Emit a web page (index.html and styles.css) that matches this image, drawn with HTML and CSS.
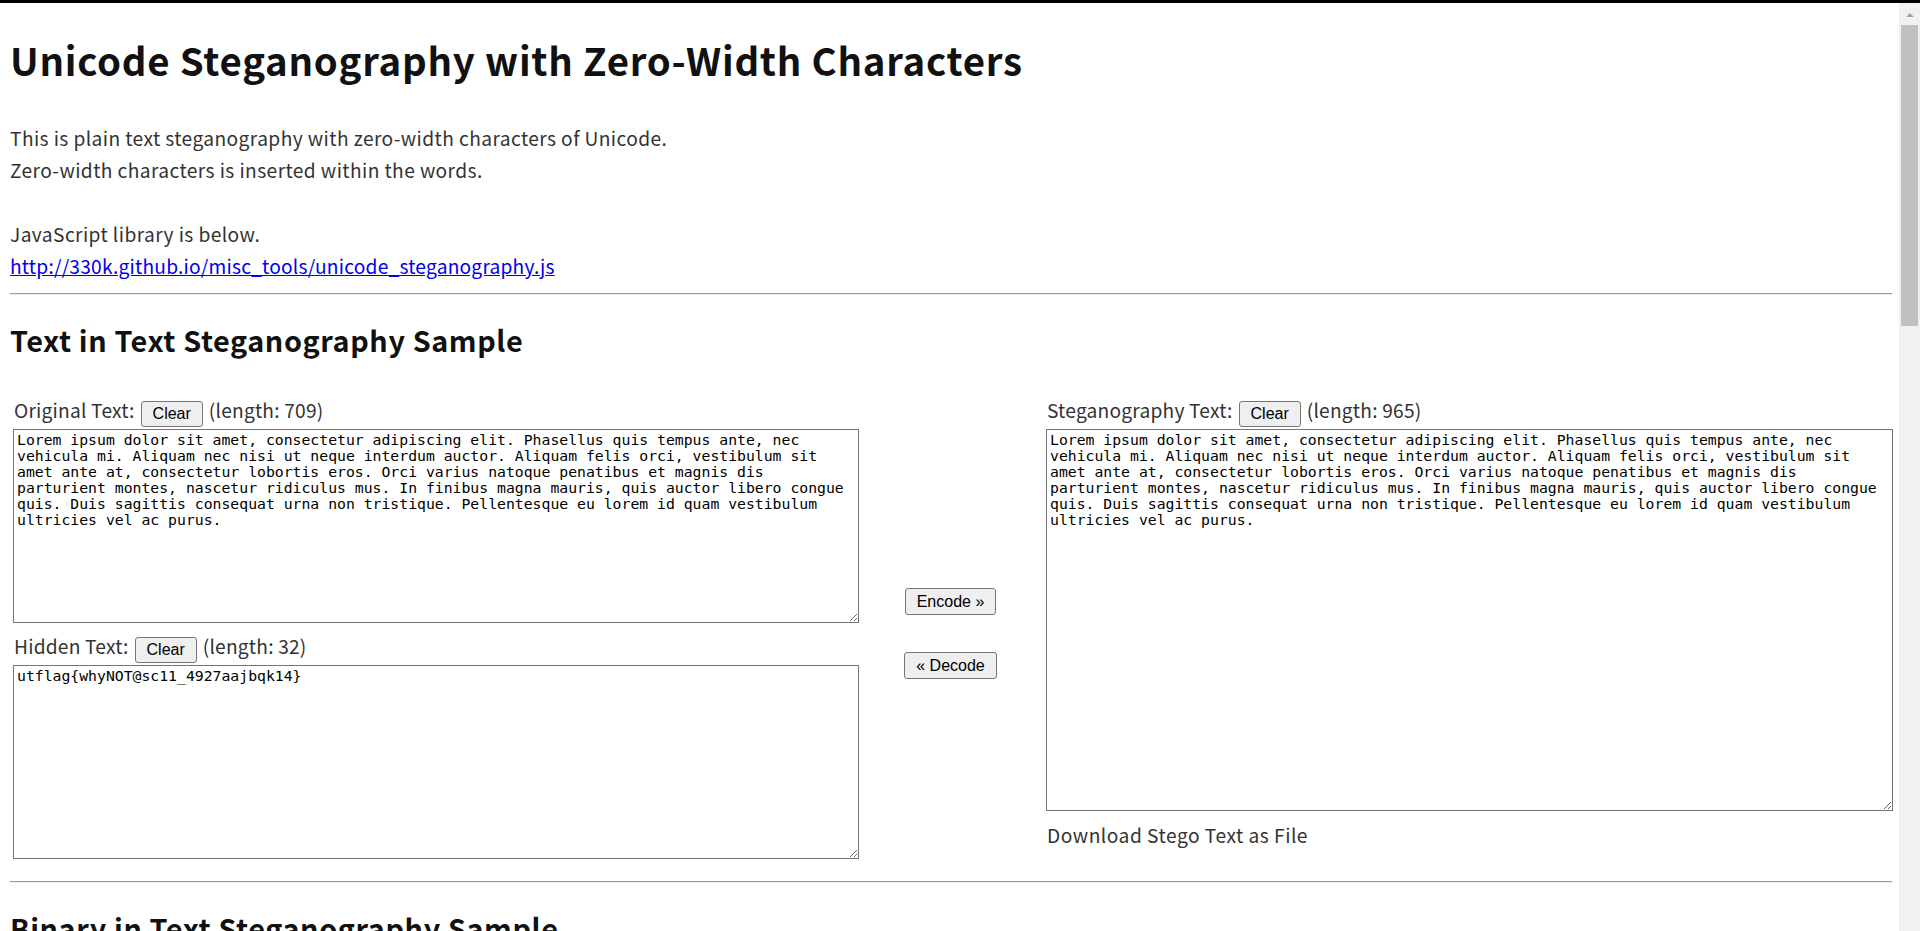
FILE: index.html
```html
<!DOCTYPE html>
<html lang="en">
<head>
<meta charset="utf-8">
<title>Unicode Steganography with Zero-Width Characters</title>
<link rel="stylesheet" href="styles.css">
</head>
<body>
<div class="topbar"></div>
<div class="window">
  <main class="page">
    <h1 class="title">Unicode Steganography with Zero-Width Characters</h1>
    <p class="intro">This is plain text steganography with zero-width characters of Unicode.<br>Zero-width characters is inserted within the words.<br><br>JavaScript library is below.<br><a class="lib-link" href="#">http://330k.github.io/misc_tools/unicode_steganography.js</a></p>
    <hr class="rule">
    <h2 class="section-title">Text in Text Steganography Sample</h2>
    <div class="workspace">
      <div class="col">
        <div class="field-label"><span>Original Text:</span><button class="btn btn-clear">Clear</button><span>(length: 709)</span></div>
        <textarea class="text-box box-short">Lorem ipsum dolor sit amet, consectetur adipiscing elit. Phasellus quis tempus ante, nec vehicula mi. Aliquam nec nisi ut neque interdum auctor. Aliquam felis orci, vestibulum sit amet ante at, consectetur lobortis eros. Orci varius natoque penatibus et magnis dis parturient montes, nascetur ridiculus mus. In finibus magna mauris, quis auctor libero congue quis. Duis sagittis consequat urna non tristique. Pellentesque eu lorem id quam vestibulum ultricies vel ac purus.</textarea>
        <div class="field-label field-gap"><span>Hidden Text:</span><button class="btn btn-clear">Clear</button><span>(length: 32)</span></div>
        <textarea class="text-box box-short">utflag{whyNOT@sc11_4927aajbqk14}</textarea>
      </div>
      <div class="col col-actions">
        <button class="btn btn-action">Encode »</button>
        <button class="btn btn-action">« Decode</button>
      </div>
      <div class="col">
        <div class="field-label"><span>Steganography Text:</span><button class="btn btn-clear">Clear</button><span>(length: 965)</span></div>
        <textarea class="text-box box-tall">Lorem ipsum dolor sit amet, consectetur adipiscing elit. Phasellus quis tempus ante, nec vehicula mi. Aliquam nec nisi ut neque interdum auctor. Aliquam felis orci, vestibulum sit amet ante at, consectetur lobortis eros. Orci varius natoque penatibus et magnis dis parturient montes, nascetur ridiculus mus. In finibus magna mauris, quis auctor libero congue quis. Duis sagittis consequat urna non tristique. Pellentesque eu lorem id quam vestibulum ultricies vel ac purus.</textarea>
        <div class="download">Download Stego Text as File</div>
      </div>
    </div>
    <hr class="rule rule-bottom">
    <h2 class="section-title">Binary in Text Steganography Sample</h2>
  </main>
  <div class="scrollbar">
    <div class="scroll-arrow"></div>
    <div class="scroll-thumb"></div>
  </div>
</div>
</body>
</html>
```

FILE: styles.css
```css
html, body {
  margin: 0;
  height: 100%;
  overflow: hidden;
  background: #fff;
}
body {
  display: flex;
  flex-direction: column;
  font-family: "Noto Sans CJK JP", "Noto Sans", sans-serif;
  color: #333;
}
.topbar {
  flex: none;
  height: 3px;
  background: #000;
}
.window {
  flex: 1;
  min-height: 0;
  display: flex;
}
.page {
  flex: 1;
  min-width: 0;
  overflow: hidden;
  padding: 0 7px 0 10px;
}
.title {
  margin: 34px 0 0;
  font-size: 38.4px;
  line-height: 44px;
  font-weight: 700;
  letter-spacing: 0.75px;
  color: #111;
}
.intro {
  margin: 41px 0 0;
  font-size: 19.2px;
  line-height: 32px;
  letter-spacing: 0.4px;
}
.lib-link {
  color: #0000ee;
  letter-spacing: 0.2px;
}
.rule {
  height: 0;
  margin: 11px 0 0;
  border: 0;
  border-top: 1px solid #9a9a9a;
  border-bottom: 1px solid #eee;
}
.rule-bottom {
  margin-top: 22px;
}
.section-title {
  margin: 27px 0 0;
  font-size: 28.8px;
  line-height: 36px;
  font-weight: 700;
  letter-spacing: 0.6px;
  color: #111;
}
.workspace {
  display: grid;
  grid-template-columns: 846px 187px 847px;
  align-items: start;
  margin: 43px 0 0 3px;
}
.field-label {
  display: flex;
  align-items: flex-start;
  gap: 6px;
  height: 28px;
  padding-left: 1px;
  font-size: 19.2px;
  line-height: 18px;
  letter-spacing: 0.2px;
  white-space: nowrap;
}
.field-gap {
  margin-top: 14px;
}
.btn {
  margin: 0;
  font-family: "Liberation Sans", Arial, sans-serif;
  font-size: 16px;
  letter-spacing: 0;
  color: #000;
  background: #efefef;
  border: 1px solid #767676;
  border-radius: 3px;
}
.btn-clear {
  height: 26px;
  padding: 0 11px;
  line-height: 24px;
}
.btn-action {
  height: 27px;
  padding: 0 11px;
  line-height: 25px;
}
.text-box {
  display: block;
  box-sizing: border-box;
  width: 100%;
  margin: 0;
  padding: 2px 3px;
  border: 1px solid #767676;
  border-radius: 0;
  font-family: "DejaVu Sans Mono", monospace;
  font-size: 14.78px;
  line-height: 16px;
  color: #000;
  background: #fff;
  resize: both;
}
.box-short {
  height: 194px;
}
.box-tall {
  height: 382px;
}
.col-actions {
  display: flex;
  flex-direction: column;
  align-items: center;
  gap: 37px;
  padding: 187px 4px 0 0;
}
.download {
  margin-top: 8px;
  padding-left: 1px;
  font-size: 19.2px;
  line-height: 32px;
  letter-spacing: 0.5px;
}
.scrollbar {
  flex: none;
  width: 21px;
  display: flex;
  flex-direction: column;
  align-items: center;
  background: #f1f1f1;
}
.scroll-arrow {
  width: 0;
  height: 0;
  margin-top: 10px;
  border-left: 4.5px solid transparent;
  border-right: 4.5px solid transparent;
  border-bottom: 4px solid #a3a3a3;
}
.scroll-thumb {
  width: 17px;
  height: 301px;
  margin-top: 8px;
  background: #c1c1c1;
}
```
